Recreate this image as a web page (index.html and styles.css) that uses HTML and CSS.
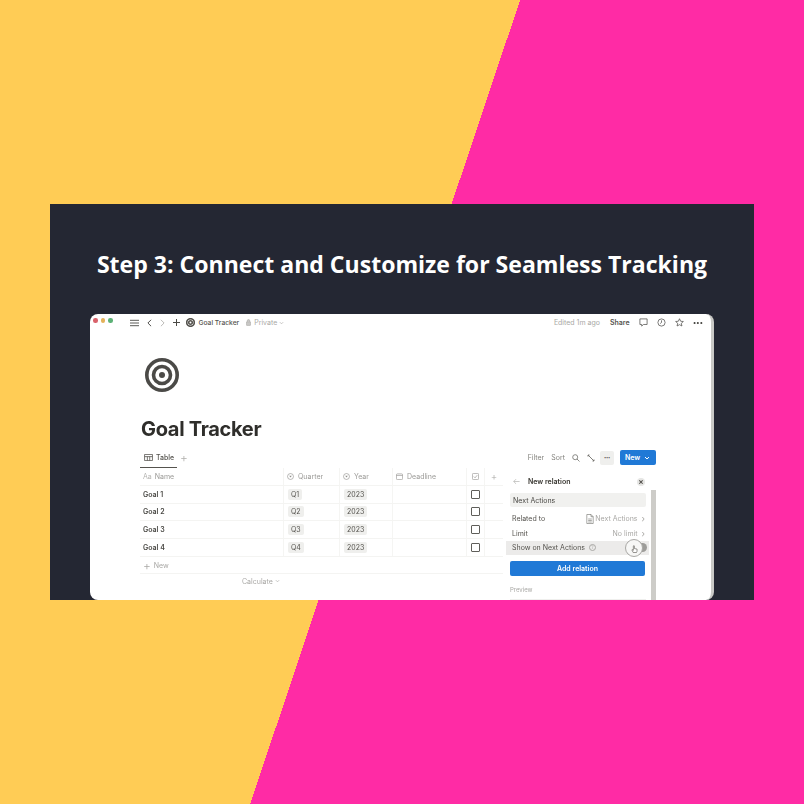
FILE: index.html
```html
<!DOCTYPE html>
<html lang="en">
<head>
<meta charset="utf-8">
<title>Step 3: Connect and Customize for Seamless Tracking</title>
<link rel="stylesheet" href="styles.css">
</head>
<body>
<main class="card">
  <h2 class="headline">Step 3: Connect and Customize for Seamless Tracking</h2>
  <section class="window">
    <header class="topbar">
      <div class="lights"><i class="light red"></i><i class="light amber"></i><i class="light green"></i></div>
      <div class="nav">
        <svg class="ic-menu" viewBox="0 0 10 8"><path d="M0 1h10M0 4h10M0 7h10"/></svg>
        <svg class="ic-chev" viewBox="0 0 6 10"><path d="M5 1 1 5l4 4"/></svg>
        <svg class="ic-chev faint" viewBox="0 0 6 10"><path d="M1 1l4 4-4 4"/></svg>
        <svg class="ic-plus" viewBox="0 0 8 8"><path d="M4 0v8M0 4h8"/></svg>
      </div>
      <svg class="ic-page" viewBox="0 0 10 10"><circle cx="5" cy="5" r="4.2"/><circle cx="5" cy="5" r="2"/></svg>
      <span class="page-name">Goal Tracker</span>
      <svg class="ic-lock" viewBox="0 0 6 8"><rect x="0.5" y="3.2" width="5" height="4.3" rx=".6"/><path d="M1.5 3.4V2a1.5 1.5 0 0 1 3 0v1.4"/></svg>
      <span class="private">Private</span><svg class="ic-caret" viewBox="0 0 6 4"><path d="M1 1l2 2 2-2"/></svg>
      <span class="edited">Edited 1m ago</span>
      <span class="share">Share</span>
      <svg class="ic-top" viewBox="0 0 10 10"><path d="M1 1h8v6.2H5L3 9V7.200H1z"/></svg>
      <svg class="ic-top" viewBox="0 0 10 10"><circle cx="5" cy="5" r="4"/><path d="M5 2.600V5L3.500 6.200"/></svg>
      <svg class="ic-top" viewBox="0 0 10 10"><path d="M5 .8l1.300 2.800 3 .3-2.300 2 .7 3L5 7.400 2.300 8.900l.7-3-2.300-2 3-.3z"/></svg>
      <span class="more">•••</span>
    </header>

    <div class="page">
      <svg class="target" viewBox="0 0 34 34"><circle cx="17" cy="17" r="15.200"/><circle cx="17" cy="17" r="8.500"/><circle class="dot" cx="17" cy="17" r="3"/></svg>
      <h1 class="title">Goal Tracker</h1>

      <div class="toolbar">
        <div class="tab">
          <svg class="ic-table" viewBox="0 0 10 8"><path d="M.5.500h9v7h-9zM.5 3h9M3.700 3v4.500M6.400 3v4.500"/></svg>
          <span>Table</span>
        </div>
        <span class="tab-add">+</span>
        <div class="actions">
          <span>Filter</span>
          <span>Sort</span>
          <svg class="ic-search" viewBox="0 0 8 8"><circle cx="3.200" cy="3.200" r="2.500"/><path d="M5 5l2.500 2.500"/></svg>
          <svg class="ic-expand" viewBox="0 0 8 8"><path d="M1 1l6 6M1 1h1.500M1 1v1.500M7 7H5.500M7 7V5.500"/></svg>
          <span class="dots">•••</span>
          <div class="new-btn"><span>New</span><svg class="ic-down" viewBox="0 0 6 4"><path d="M1 1l2 2 2-2"/></svg></div>
        </div>
      </div>

      <div class="db">
        <div class="table">
          <div class="row head">
            <div class="cell"><span class="aa">Aa</span>Name</div>
            <div class="cell"><svg class="ic-sel" viewBox="0 0 8 8"><circle cx="4" cy="4" r="3.400"/><path class="fill" d="M2.500 3.200h3L4 5.200z"/></svg>Quarter</div>
            <div class="cell"><svg class="ic-sel" viewBox="0 0 8 8"><circle cx="4" cy="4" r="3.400"/><path class="fill" d="M2.500 3.200h3L4 5.200z"/></svg>Year</div>
            <div class="cell"><svg class="ic-cal" viewBox="0 0 8 8"><rect x=".5" y="1" width="7" height="6.500" rx="1"/><path d="M.5 2.800h7"/></svg>Deadline</div>
            <div class="cell center"><svg class="ic-cal" viewBox="0 0 8 8"><rect x=".5" y=".5" width="7" height="7" rx="1"/><path d="M2 4l1.500 1.500L6 2.500"/></svg></div>
            <div class="cell center plus">+</div>
          </div>
          <div class="row">
            <div class="cell goal">Goal 1</div><div class="cell"><span class="tag">Q1</span></div><div class="cell"><span class="tag">2023</span></div><div class="cell"></div><div class="cell center"><i class="check"></i></div><div class="cell"></div>
          </div>
          <div class="row">
            <div class="cell goal">Goal 2</div><div class="cell"><span class="tag">Q2</span></div><div class="cell"><span class="tag">2023</span></div><div class="cell"></div><div class="cell center"><i class="check"></i></div><div class="cell"></div>
          </div>
          <div class="row">
            <div class="cell goal">Goal 3</div><div class="cell"><span class="tag">Q3</span></div><div class="cell"><span class="tag">2023</span></div><div class="cell"></div><div class="cell center"><i class="check"></i></div><div class="cell"></div>
          </div>
          <div class="row">
            <div class="cell goal">Goal 4</div><div class="cell"><span class="tag">Q4</span></div><div class="cell"><span class="tag">2023</span></div><div class="cell"></div><div class="cell center"><i class="check"></i></div><div class="cell"></div>
          </div>
          <div class="new-row"><span class="new-plus">+</span>New</div>
          <div class="calc">Calculate <svg class="ic-caret" viewBox="0 0 6 4"><path d="M1 1l2 2 2-2"/></svg></div>
        </div>

        <aside class="panel">
          <div class="panel-body">
            <div class="panel-head">
              <svg class="ic-back" viewBox="0 0 8 8"><path d="M7.500 4H.8M3.500 1.300.8 4l2.700 2.700"/></svg>
              <span class="panel-title">New relation</span>
              <span class="close">×</span>
            </div>
            <div class="input">Next Actions</div>
            <div class="opt"><span>Related to</span><span class="val"><svg class="ic-doc" viewBox="0 0 8 10"><path d="M.8.500h4.200l2.200 2.200v6.800H.8zM5 .5v2.200h2.200M2.200 5h3.600M2.200 6.500h3.600M2.200 8h3.600"/></svg>Next Actions<b class="gt">›</b></span></div>
            <div class="opt"><span>Limit</span><span class="val">No limit<b class="gt">›</b></span></div>
            <div class="opt hover"><span class="show">Show on Next Actions<i class="help">?</i></span>
              <span class="toggle"><i class="knob"></i><svg class="cursor" viewBox="0 0 8 9"><path d="M2.500 8.500 1 5.500l1-.3.700.8V1.300a.6.6 0 0 1 1.200 0V4l3 .6V7l-.6 1.500z"/></svg></span>
            </div>
            <div class="add-btn">Add relation</div>
            <div class="preview">Preview</div>
            <div class="preview-box"></div>
          </div>
          <div class="scrollbar"></div>
        </aside>
      </div>
    </div>
  </section>
</main>
</body>
</html>
```
FILE: styles.css
```css
* { box-sizing: border-box; }
html, body { margin: 0; height: 100%; }
body {
  width: 804px;
  height: 804px;
  overflow: hidden;
  display: flex;
  align-items: flex-start;
  justify-content: center;
  padding-top: 204px;
  background: linear-gradient(108.56deg, #ffcc55 calc(50% - 16px), #ff2ba5 calc(50% - 16px));
  font-family: "Inter", "Liberation Sans", sans-serif;
}
svg { display: block; fill: none; stroke: currentColor; flex: none; }
i { display: block; }

.card {
  width: 704px;
  height: 396px;
  background: #242733;
  padding: 0 40px;
  display: flex;
  flex-direction: column;
  align-items: stretch;
}
.headline {
  margin: 0;
  height: 110px;
  padding-top: 44px;
  font: 700 23.050px/32px "Open Sans", sans-serif;
  color: #fff;
  text-align: center;
  white-space: nowrap;
}
.window {
  flex: 1;
  background: #fff;
  border-radius: 8px;
  border-right: 3px solid #c9c9c6;
  overflow: hidden;
  display: flex;
  flex-direction: column;
  color: #37352f;
  filter: blur(.45px);
}

/* top bar */
.topbar {
  height: 17px;
  flex: none;
  display: flex;
  align-items: center;
  padding: 0 8px 0 3px;
  font-size: 7px;
  color: #55534e;
}
.lights { display: flex; gap: 3px; align-self: flex-start; margin-top: 4px; }
.light { width: 4.500px; height: 4.500px; border-radius: 50%; }
.red { background: #d9626b; }
.amber { background: #e3b25a; }
.green { background: #5cb176; }
.nav { display: flex; align-items: center; gap: 8px; margin-left: 17px; color: #4a4945; }
.ic-menu { width: 9px; height: 8px; stroke-width: 1; }
.ic-chev { width: 5px; height: 8px; stroke-width: 1.200; }
.ic-chev.faint { color: #b9b8b5; }
.ic-plus { width: 7px; height: 7px; stroke-width: 1.200; }
.ic-page { width: 9px; height: 9px; margin-left: 6px; stroke-width: 1.800; color: #55534e; }
.page-name { margin-left: 4px; font-size: 6.700px; font-weight: 500; }
.ic-lock { width: 5px; height: 7px; margin-left: 7px; color: #aaa9a6; fill: #c9c8c6; stroke-width: .7; }
.private { margin-left: 3px; color: #aaa9a6; }
.ic-caret { display: inline-block; width: 5px; height: 4px; margin-left: 2px; color: #b5b4b1; stroke-width: .9; }
.edited { margin-left: auto; color: #a9a8a5; }
.share { margin-left: 10px; font-weight: 600; }
.ic-top { width: 9px; height: 9px; margin-left: 9px; stroke-width: .8; color: #4a4945; }
.more { margin-left: 9px; font-size: 6.500px; letter-spacing: -.2px; color: #4a4945; }

/* page */
.page { flex: 1; padding: 0 55px 0 50px; display: flex; flex-direction: column; min-height: 0; }
.target { width: 34px; height: 34px; margin: 27px 0 0 5px; color: #4b4a47; stroke-width: 3.600; }
.target .dot { fill: currentColor; stroke: none; }
.title {
  margin: 25px 0 0 1px;
  font-size: 20px;
  line-height: 24px;
  font-weight: 700;
  letter-spacing: -.3px;
  color: #2f2e2b;
}

.toolbar {
  margin-top: 6px;
  height: 21px;
  flex: none;
  display: flex;
  align-items: center;
  font-size: 7px;
  color: #6b6a66;
}
.tab {
  width: 37px;
  height: 21px;
  display: flex;
  align-items: center;
  gap: 3px;
  padding: 0 0 0 4px;
  border-bottom: 1.500px solid #55534e;
  font-weight: 500;
  color: #55534e;
}
.ic-table { width: 9px; height: 7px; stroke-width: .9; }
.tab-add { margin-left: 3px; font-size: 12px; font-weight: 300; color: #b0afac; }
.actions { margin-left: auto; display: flex; align-items: center; gap: 7px; color: #85847f; }
.ic-search { width: 8px; height: 8px; stroke-width: .8; color: #6f6e6a; }
.ic-expand { width: 8px; height: 8px; stroke-width: .9; color: #6f6e6a; }
.dots {
  width: 14px;
  height: 14px;
  background: #efefed;
  border-radius: 2px;
  font-size: 4px;
  line-height: 14px;
  text-align: center;
  letter-spacing: -.2px;
  margin-left: -2px;
  color: #55534e;
}
.new-btn {
  width: 36px;
  height: 15px;
  margin-left: -1px;
  background: #2079d6;
  border-radius: 2px;
  color: #fff;
  font-weight: 600;
  display: flex;
  align-items: center;
  justify-content: space-between;
  padding: 0 6px 0 5px;
}
.ic-down { width: 6px; height: 4px; stroke-width: 1; }

/* database */
.db { flex: 1; display: flex; min-height: 0; }
.table { width: 363px; flex: none; font-size: 7px; color: #9b9a97; }
.row {
  display: grid;
  grid-template-columns: 144px 56px 53px 74px 18px 18px;
  height: 17.750px;
  border-bottom: 1px solid #f4f4f2;
}
.cell {
  display: flex;
  align-items: center;
  padding-left: 3px;
  border-right: 1px solid #f5f5f3;
  min-width: 0;
}
.cell:last-child { border-right: 0; }
.cell.center { justify-content: center; padding-left: 0; }
.aa { margin-right: 3px; color: #b5b4b1; font-size: 7px; }
.ic-sel, .ic-cal { width: 7px; height: 7px; margin-right: 4px; stroke-width: .7; color: #8f8e8a; }
.center .ic-cal { margin-right: 0; }
.ic-sel .fill { fill: currentColor; stroke: none; }
.plus { font-size: 10px; font-weight: 300; color: #aaa9a6; }
.goal { color: #4a4945; font-weight: 600; }
.tag {
  padding: 1px 3px;
  background: #efefed;
  border-radius: 2px;
  color: #55534e;
  line-height: 9px;
  font-size: 7px;
  margin-left: 1px;
}
.check { width: 9px; height: 9px; border: 1px solid #5f5e5a; border-radius: 1px; }
.new-row {
  height: 17.500px;
  display: flex;
  align-items: center;
  padding-left: 3px;
  border-bottom: 1px solid #f4f4f2;
  color: #a9a8a5;
}
.new-plus { font-size: 12px; font-weight: 300; margin-right: 3px; }
.calc {
  height: 14px;
  display: flex;
  align-items: center;
  padding-left: 102px;
  color: #a9a8a5;
}

/* relation panel */
.panel { flex: 1; display: flex; min-width: 0; font-size: 7px; color: #55534e; overflow: hidden; }
.panel-body { width: 147px; flex: none; padding: 0 2px 0 3px; }
.panel-head { height: 25px; display: flex; align-items: center; padding: 2px 0 0 7px; }
.ic-back { width: 7px; height: 7px; stroke-width: .7; color: #aaa9a6; }
.panel-title { margin-left: 8px; font-weight: 600; color: #37352f; }
.close {
  margin-left: auto;
  margin-right: 3px;
  width: 8px;
  height: 8px;
  border-radius: 50%;
  background: #e6e6e4;
  font-size: 8px;
  line-height: 8px;
  text-align: center;
  color: #55534e;
  font-weight: 700;
}
.input {
  margin: 0 2px 0 4px;
  height: 14px;
  background: #f1f1ef;
  border-radius: 2px;
  display: flex;
  align-items: center;
  padding-left: 3px;
  color: #4a4945;
}
.opt {
  height: 14.500px;
  display: flex;
  align-items: center;
  justify-content: space-between;
  padding: 0 3px 0 6px;
}
.input + .opt { margin-top: 4px; height: 15px; }
.opt.hover { background: #ecebea; margin: 0 -1px 0 0; }
.val { display: flex; align-items: center; color: #a9a8a5; }
.ic-doc { width: 8px; height: 10px; stroke-width: .6; margin-right: 1px; color: #6f6e6a; }
.gt { margin-left: 4px; font-weight: 400; font-size: 9px; line-height: 7px; color: #a9a8a5; }
.show { display: flex; align-items: center; }
.help {
  width: 7px;
  height: 7px;
  margin-left: 4px;
  border: .6px solid #aaa9a6;
  border-radius: 50%;
  font-size: 4.500px;
  font-style: normal;
  line-height: 6px;
  text-align: center;
  color: #aaa9a6;
}
.toggle {
  position: relative;
  width: 20px;
  height: 9px;
  background: #9d9c99;
  border-radius: 5px;
  margin-right: -1px;
}
.knob {
  position: absolute;
  left: -2px;
  top: -4.500px;
  width: 18px;
  height: 18px;
  border-radius: 50%;
  background: #f7f7f6;
  border: 1.500px solid #a9a8a5;
}
.cursor {
  position: absolute;
  left: 4px;
  top: 2px;
  width: 7px;
  height: 8px;
  fill: #fff;
  stroke: #55534e;
  stroke-width: .7;
}
.add-btn {
  margin: 6px 3px 0 4px;
  height: 15px;
  border-radius: 2px;
  background: #2079d6;
  color: #fff;
  font-weight: 600;
  text-align: center;
  line-height: 15px;
}
.preview { margin: 10px 0 0 4px; font-size: 6px; line-height: 8px; color: #a9a8a5; }
.preview-box { height: 6px; margin: 5px 2px 0 4px; border-top: 1px solid #efefed; }
.scrollbar { width: 5px; margin: 22px 0 0 1px; background: #cdccc8; }
```
